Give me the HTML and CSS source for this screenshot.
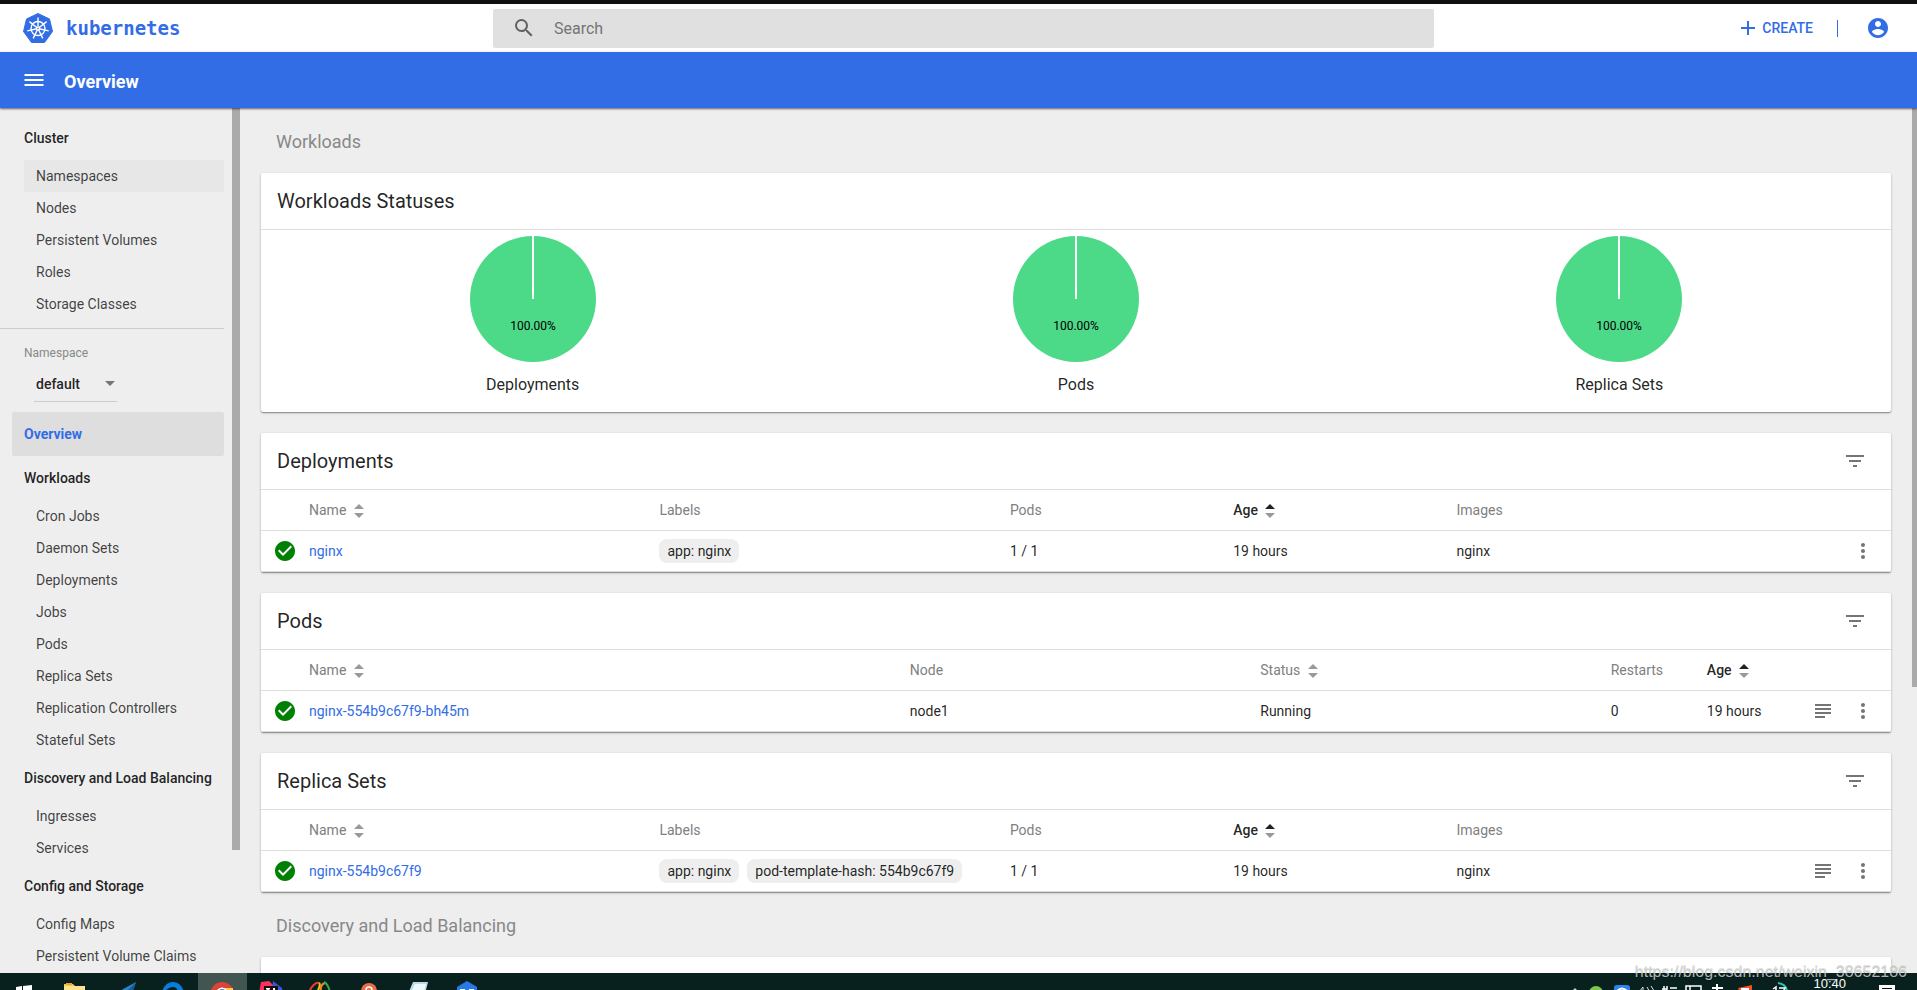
FILE: index.html
```html
<!DOCTYPE html>
<html lang="en">
<head>
<meta charset="utf-8">
<title>Overview - Kubernetes Dashboard</title>
<link rel="stylesheet" href="styles.css">
</head>
<body>
<svg class="defs" aria-hidden="true">
  <symbol id="filter" viewBox="0 0 24 24"><path d="M10 18h4v-2h-4v2zM3 6v2h18V6H3zm3 7h12v-2H6v2z"/></symbol>
  <symbol id="more" viewBox="0 0 24 24"><path d="M12 8c1.1 0 2-.9 2-2s-.9-2-2-2-2 .9-2 2 .9 2 2 2zm0 2c-1.1 0-2 .9-2 2s.9 2 2 2 2-.9 2-2-.9-2-2-2zm0 6c-1.1 0-2 .9-2 2s.9 2 2 2 2-.9 2-2-.9-2-2-2z"/></symbol>
  <symbol id="logs" viewBox="0 0 24 24"><path d="M4 5h16v2H4zM4 9h16v2H4zM4 13h16v2H4zM4 17h10v2H4z"/></symbol>
  <symbol id="check" viewBox="0 0 24 24"><path d="M12 2C6.480 2 2 6.480 2 12s4.480 10 10 10 10-4.480 10-10S17.520 2 12 2zm-2 15l-5-5 1.410-1.410L10 14.170l7.590-7.590L19 8l-9 9z"/></symbol>
  <symbol id="sort" viewBox="0 0 10 14"><path class="up" d="M0 5 5 0l5 5z"/><path class="down" d="M0 9h10l-5 5z"/></symbol>
</svg>

<header class="topbar">
  <a class="brand" href="#">
    <svg class="logo" viewBox="0 0 30 30" aria-hidden="true">
      <path class="logo-bg" d="M15 0.500 26.500 6 29.500 18.500 21.500 29.500H8.500L0.500 18.500 3.500 6z"/>
      <g class="wheel">
        <circle cx="15" cy="15.500" r="7"/>
        <path d="M15 4.500v9M15 15.500 23.600 8.600M15 15.500 25.700 17.900M15 15.500 19.800 25.400M15 15.500 10.200 25.400M15 15.500 4.300 17.900M15 15.500 6.400 8.600"/>
      </g>
      <circle class="hub" cx="15" cy="15.500" r="2.200"/>
      <circle class="hub-core" cx="15" cy="15.500" r="0.800"/>
    </svg>
    <span class="wordmark">kubernetes</span>
  </a>
  <form class="search" role="search">
    <svg class="icon" viewBox="0 0 24 24" aria-hidden="true"><path d="M15.500 14h-.79l-.28-.27A6.470 6.470 0 0 0 16 9.500 6.500 6.500 0 1 0 9.500 16c1.610 0 3.090-.59 4.230-1.570l.27.28v.79l5 4.990L20.490 19l-4.990-5zm-6 0C7.010 14 5 11.990 5 9.500S7.010 5 9.500 5 14 7.010 14 9.500 11.990 14 9.500 14z"/></svg>
    <input class="search-input" type="text" placeholder="Search" aria-label="Search">
  </form>
  <div class="actions">
    <button class="create" type="button"><svg class="icon" viewBox="0 0 24 24" aria-hidden="true"><path d="M19 13h-6v6h-2v-6H5v-2h6V5h2v6h6v2z"/></svg>CREATE</button>
    <span class="separator"></span>
    <button class="icon-button user" type="button" aria-label="Account"><svg class="icon" viewBox="0 0 24 24" aria-hidden="true"><path d="M12 2C6.480 2 2 6.480 2 12s4.480 10 10 10 10-4.480 10-10S17.520 2 12 2zm0 3c1.660 0 3 1.340 3 3s-1.340 3-3 3-3-1.340-3-3 1.340-3 3-3zm0 14.200c-2.500 0-4.710-1.280-6-3.220.03-1.990 4-3.080 6-3.080 1.990 0 5.970 1.090 6 3.080-1.290 1.940-3.500 3.220-6 3.220z"/></svg></button>
  </div>
</header>

<div class="titlebar">
  <button class="icon-button menu" type="button" aria-label="Toggle navigation"><svg class="icon" viewBox="0 0 24 24" aria-hidden="true"><path d="M2.500 18h19v-2h-19v2zm0-5h19v-2h-19v2zm0-7v2h19V6h-19z"/></svg></button>
  <h1 class="page-title">Overview</h1>
</div>

<div class="body">
  <nav class="sidebar">
    <div class="nav-scroll">
      <a class="nav-group" href="#">Cluster</a>
      <a class="nav-item hovered" href="#">Namespaces</a>
      <a class="nav-item" href="#">Nodes</a>
      <a class="nav-item" href="#">Persistent Volumes</a>
      <a class="nav-item" href="#">Roles</a>
      <a class="nav-item" href="#">Storage Classes</a>
      <div class="namespace">
        <label class="namespace-label" for="ns">Namespace</label>
        <div class="select-wrap">
          <select class="namespace-select" id="ns"><option>default</option></select>
          <svg class="caret" viewBox="0 0 10 5" aria-hidden="true"><path d="M0 0h10L5 5z"/></svg>
        </div>
      </div>
      <a class="nav-overview" href="#">Overview</a>
      <a class="nav-group" href="#">Workloads</a>
      <a class="nav-item" href="#">Cron Jobs</a>
      <a class="nav-item" href="#">Daemon Sets</a>
      <a class="nav-item" href="#">Deployments</a>
      <a class="nav-item" href="#">Jobs</a>
      <a class="nav-item" href="#">Pods</a>
      <a class="nav-item" href="#">Replica Sets</a>
      <a class="nav-item" href="#">Replication Controllers</a>
      <a class="nav-item" href="#">Stateful Sets</a>
      <a class="nav-group" href="#">Discovery and Load Balancing</a>
      <a class="nav-item" href="#">Ingresses</a>
      <a class="nav-item" href="#">Services</a>
      <a class="nav-group" href="#">Config and Storage</a>
      <a class="nav-item" href="#">Config Maps</a>
      <a class="nav-item" href="#">Persistent Volume Claims</a>
    </div>
    <div class="scroll-track"><div class="thumb nav-thumb"></div></div>
  </nav>

  <main class="content">
    <div class="cards">
      <h2 class="section-title">Workloads</h2>

      <section class="card">
        <div class="card-head"><h3 class="card-title">Workloads Statuses</h3></div>
        <div class="charts">
          <figure class="chart">
            <svg class="pie" viewBox="0 0 126 126" aria-hidden="true"><circle cx="63" cy="63" r="63"/><path d="M63 0v63"/><text x="63" y="94">100.00%</text></svg>
            <figcaption>Deployments</figcaption>
          </figure>
          <figure class="chart">
            <svg class="pie" viewBox="0 0 126 126" aria-hidden="true"><circle cx="63" cy="63" r="63"/><path d="M63 0v63"/><text x="63" y="94">100.00%</text></svg>
            <figcaption>Pods</figcaption>
          </figure>
          <figure class="chart">
            <svg class="pie" viewBox="0 0 126 126" aria-hidden="true"><circle cx="63" cy="63" r="63"/><path d="M63 0v63"/><text x="63" y="94">100.00%</text></svg>
            <figcaption>Replica Sets</figcaption>
          </figure>
        </div>
      </section>

      <section class="card">
        <div class="card-head"><h3 class="card-title">Deployments</h3><button class="icon-button" type="button" aria-label="Filter deployments"><svg class="icon"><use href="#filter"/></svg></button></div>
        <table class="table">
          <colgroup><col class="c-status"><col class="c-large"><col class="c-large"><col class="c-medium"><col class="c-medium"><col><col class="c-actions"></colgroup>
          <thead><tr><th></th><th>Name <svg class="sort"><use href="#sort"/></svg></th><th>Labels</th><th>Pods</th><th class="sorted">Age <svg class="sort"><use href="#sort"/></svg></th><th>Images</th><th></th></tr></thead>
          <tbody><tr><td><svg class="icon ok"><use href="#check"/></svg></td><td><a class="link" href="#">nginx</a></td><td><span class="chip">app: nginx</span></td><td>1 / 1</td><td>19 hours</td><td>nginx</td><td><div class="row-actions"><button class="icon-button" type="button" aria-label="More"><svg class="icon"><use href="#more"/></svg></button></div></td></tr></tbody>
        </table>
      </section>

      <section class="card">
        <div class="card-head"><h3 class="card-title">Pods</h3><button class="icon-button" type="button" aria-label="Filter pods"><svg class="icon"><use href="#filter"/></svg></button></div>
        <table class="table">
          <colgroup><col class="c-status"><col><col class="c-large"><col class="c-large"><col class="c-small"><col class="c-small"><col class="c-actions"></colgroup>
          <thead><tr><th></th><th>Name <svg class="sort"><use href="#sort"/></svg></th><th>Node</th><th>Status <svg class="sort"><use href="#sort"/></svg></th><th>Restarts</th><th class="sorted">Age <svg class="sort"><use href="#sort"/></svg></th><th></th></tr></thead>
          <tbody><tr><td><svg class="icon ok"><use href="#check"/></svg></td><td><a class="link" href="#">nginx-554b9c67f9-bh45m</a></td><td>node1</td><td>Running</td><td>0</td><td>19 hours</td><td><div class="row-actions"><button class="icon-button" type="button" aria-label="Logs"><svg class="icon"><use href="#logs"/></svg></button><button class="icon-button" type="button" aria-label="More"><svg class="icon"><use href="#more"/></svg></button></div></td></tr></tbody>
        </table>
      </section>

      <section class="card">
        <div class="card-head"><h3 class="card-title">Replica Sets</h3><button class="icon-button" type="button" aria-label="Filter replica sets"><svg class="icon"><use href="#filter"/></svg></button></div>
        <table class="table">
          <colgroup><col class="c-status"><col class="c-large"><col class="c-large"><col class="c-medium"><col class="c-medium"><col><col class="c-actions"></colgroup>
          <thead><tr><th></th><th>Name <svg class="sort"><use href="#sort"/></svg></th><th>Labels</th><th>Pods</th><th class="sorted">Age <svg class="sort"><use href="#sort"/></svg></th><th>Images</th><th></th></tr></thead>
          <tbody><tr><td><svg class="icon ok"><use href="#check"/></svg></td><td><a class="link" href="#">nginx-554b9c67f9</a></td><td><span class="chip">app: nginx</span><span class="chip">pod-template-hash: 554b9c67f9</span></td><td>1 / 1</td><td>19 hours</td><td>nginx</td><td><div class="row-actions"><button class="icon-button" type="button" aria-label="Logs"><svg class="icon"><use href="#logs"/></svg></button><button class="icon-button" type="button" aria-label="More"><svg class="icon"><use href="#more"/></svg></button></div></td></tr></tbody>
        </table>
      </section>

      <h2 class="section-title">Discovery and Load Balancing</h2>
      <section class="card"><div class="card-head"></div></section>
    </div>
    <div class="scroll-track"><div class="thumb page-thumb"></div></div>
  </main>
</div>

<footer class="taskbar">
  <div class="apps">
    <span class="app"><svg class="app-icon" viewBox="0 0 24 24"><path fill="#fff" d="M2 6l6-1v8H2zM9 5l9-1v9H9z"/></svg></span>
    <span class="app"><svg class="app-icon" viewBox="0 0 24 24"><path fill="#f5c84c" d="M1 3h9l2 2h10v8H1z"/><path fill="#ffe28c" d="M1 5h21v8H1z"/><path fill="#e8a33a" d="M3 2h6v2H3z"/></svg></span>
    <span class="app"><svg class="app-icon" viewBox="0 0 24 24"><path fill="#2a86c8" d="M24 1 4 12h16z"/><path fill="#175a94" d="M24 1 13 12h7z"/></svg></span>
    <span class="app"><svg class="app-icon" viewBox="0 0 24 24"><path fill="#0a7ddc" d="M1 12C2 5 7 1 12 1s10 4 11 11h-6c0-4-2-6-5-6s-6 2-11 6z"/></svg></span>
    <span class="app active"><svg class="app-icon" viewBox="0 0 24 24"><path fill="#db4437" d="M1 9C3 4 7 1 12 1s9 3 11 7H12l-6 4H3z"/><path fill="#ffcd40" d="M13 7h10v5H13z"/><circle cx="12" cy="12" r="5.500" fill="#fff"/><circle cx="12" cy="12" r="4" fill="#4285f4"/></svg></span>
    <span class="app"><svg class="app-icon" viewBox="0 0 24 24"><path fill="#fe315d" d="M2 1 10 0l4 4v8H0z"/><path fill="#3f55d8" d="M14 0l9 7 1 5H13z"/><path fill="#111" d="M5 5h14v7H5z"/><path fill="#fff" d="M7 7h4v1.500H9.800V12H8.200V8.500H7zM14 7h2v5h-2z"/></svg></span>
    <span class="app"><svg class="app-icon" viewBox="0 0 24 24" fill="none" stroke-width="2"><path stroke="#ec3b2f" d="M1 12C3 5 8 1 11 2"/><path stroke="#f7c51e" d="M11 2c2 1 0 5-2 10"/><path stroke="#f08a24" d="M13 12c-1-6 1-9 4-10"/><path stroke="#35a853" d="M16 1c2 1 5 5 6 11"/></svg></span>
    <span class="app"><svg class="app-icon" viewBox="0 0 24 24"><path fill="#ee6a4b" d="M4 10a8 8 0 0 1 16 0v4H4z"/><circle cx="12" cy="9" r="3" fill="none" stroke="#fff" stroke-width="1.500"/></svg></span>
    <span class="app"><svg class="app-icon" viewBox="0 0 24 24"><path fill="#b9dce6" d="M7 1h15l-3 12H2z"/><path fill="#eef8fb" d="M9 3h11l-2 8H5z"/></svg></span>
    <span class="app"><svg class="app-icon" viewBox="0 0 24 24"><path fill="#2878e8" d="M2 6 12 0l10 6v8H2z"/><path fill="#fff" d="M5 8h5v4H5zM14 8h5v4h-5z"/></svg></span>
  </div>
  <div class="tray">
    <svg class="tray-icons" viewBox="0 0 240 17" aria-hidden="true">
      <path d="M0 17l2-2 2 2z" fill="#ccc"/>
      <circle cx="23" cy="20" r="7" fill="#7cc84a"/>
      <rect x="41" y="12" width="16" height="14" rx="3" fill="#2b84ee"/><path d="M44 18q5-5 10 0" fill="none" stroke="#fff" stroke-width="2"/>
      <path d="M66 19l4-5v8M74 14q3 3 1 7M78 13q4 4 2 8" fill="none" stroke="#ddd"/>
      <path d="M89 16h5M91 13v5M94 13v5M97 15h7M113 13h15v10h-15zM117 13v9" fill="none" stroke="#fff" stroke-width="1.500"/>
      <path d="M144 11v8M139 15h11" stroke="#fff" stroke-width="2"/>
      <path d="M165 15l14-3v8h-12z" fill="#f4511e"/><path d="M168 16h8" stroke="#fff" stroke-width="2"/>
      <path d="M205 10q8 1 9 8" fill="none" stroke="#29c7ac" stroke-width="2"/><path d="M200 16l3-2v4M206 15h6l-2 4" fill="none" stroke="#fff" stroke-width="1.500"/>
    </svg>
    <time class="clock">10:40</time>
    <svg class="note" viewBox="0 0 16 12" aria-hidden="true"><path fill="#fff" d="M0 0h16v12H0z"/><path stroke="#111" d="M3 3.500h10"/></svg>
  </div>
</footer>
<div class="watermark">https://blog.csdn.net/weixin_38652186</div>
</body>
</html>
```
FILE: styles.css
```css
* { box-sizing: border-box; }

body {
  display: flex;
  flex-direction: column;
  height: 100vh;
  margin: 0;
  overflow: hidden;
  border-top: 4px solid #111;
  background: #eee;
  color: rgba(0, 0, 0, 0.87);
  font: 14px/20px Roboto, "Noto Sans", sans-serif;
}

h1, h2, h3, figure { margin: 0; font-weight: 400; }
a { color: inherit; text-decoration: none; }
button, input, select { font: inherit; }
button { padding: 0; border: 0; background: none; color: inherit; }
.defs { position: absolute; width: 0; height: 0; }
.icon { display: block; width: 24px; height: 24px; fill: currentColor; }
.icon-button { display: block; }

/* Header */
.topbar {
  display: grid;
  grid-template-columns: 493fr 941fr 483fr;
  flex: none;
  align-items: center;
  height: 48px;
  background: #fff;
}
.brand { display: flex; align-items: center; gap: 13px; padding-left: 23px; color: #326de6; }
.logo { width: 30px; height: 30px; }
.logo-bg { fill: #326de6; stroke: #326de6; stroke-linejoin: round; }
.wheel { fill: none; stroke: #fff; stroke-width: 1.4; }
.hub { fill: #fff; }
.hub-core { fill: #326de6; }
.wordmark { font: 700 19px/24px "DejaVu Sans Mono", monospace; }
.search {
  display: flex;
  align-items: center;
  gap: 18px;
  height: 39px;
  padding-left: 19px;
  border-radius: 2px;
  background: #e0e0e0;
  color: #616161;
}
.search-input {
  flex: 1;
  min-width: 0;
  padding: 2px 0 0;
  border: 0;
  outline: 0;
  background: none;
  color: inherit;
  font-size: 16px;
}
.search-input::placeholder { color: #757575; opacity: 1; }
.actions { display: flex; align-items: center; justify-content: flex-end; padding-right: 27px; color: #326de6; }
.create { display: flex; align-items: center; gap: 2px; font-weight: 500; }
.separator { width: 1px; height: 17px; margin: 0 28px 0 24px; background: #326de6; }

.titlebar {
  display: flex;
  position: relative;
  z-index: 1;
  flex: none;
  align-items: center;
  gap: 18px;
  height: 56px;
  padding-left: 22px;
  background: #326de6;
  box-shadow: 0 1px 2px rgba(0, 0, 0, 0.6);
  color: #fff;
}
.page-title { padding-top: 3px; font-size: 18px; font-weight: 700; line-height: 24px; }

.body { display: flex; flex: 1; min-height: 0; }
.scroll-track { flex: none; }
.thumb { background: #aaa; }

/* Navigation */
.sidebar { display: flex; flex: none; width: 240px; overflow: hidden; }
.nav-scroll { flex: 1; padding: 8px 8px 0 0; }
.nav-thumb { width: 8px; height: 742px; }
.nav-group { display: block; padding: 12px 0 12px 24px; font-weight: 500; white-space: nowrap; }
.nav-item {
  display: block;
  margin-left: 24px;
  padding: 6px 12px;
  border-radius: 2px;
  color: rgba(0, 0, 0, 0.74);
}
.hovered { background: #e7e7e7; }
.namespace { margin-top: 8px; padding: 14px 0 10px 24px; border-top: 1px solid #ccc; }
.namespace-label { display: block; color: #888; font-size: 12px; }
.select-wrap { position: relative; width: 83px; margin: 4px 0 0 10px; border-bottom: 1px solid #ccc; }
.namespace-select {
  display: block;
  width: 100%;
  height: 34px;
  padding: 0 2px;
  border: 0;
  background: none;
  color: inherit;
  font-weight: 500;
  appearance: none;
}
.caret { position: absolute; top: 14px; right: 2px; width: 10px; height: 5px; fill: #757575; }
.nav-overview {
  display: block;
  margin-left: 12px;
  padding: 12px;
  border-radius: 2px;
  background: #dedede;
  color: #326de6;
  font-weight: 700;
}

/* Cards */
.content { display: flex; flex: 1; min-width: 0; overflow: hidden; }
.cards { flex: 1; min-width: 0; padding: 0 21px; }
.page-thumb { width: 5px; height: 579px; }
.section-title { padding: 22px 15px 20px; color: #888; font-size: 18px; line-height: 23px; }
.card {
  border-radius: 2px;
  background: #fff;
  box-shadow: 0 1px 3px rgba(0, 0, 0, 0.2), 0 1px 1px rgba(0, 0, 0, 0.3);
}
.card + .card { margin-top: 21px; }
.card-head {
  display: flex;
  align-items: center;
  justify-content: space-between;
  height: 56px;
  padding: 0 24px 0 16px;
  color: #757575;
}
.card-title { color: rgba(0, 0, 0, 0.87); font-size: 20px; line-height: 24px; }
.charts { display: flex; border-top: 1px solid #ddd; }
.chart { display: flex; flex: 1; flex-direction: column; align-items: center; padding: 6px 0 15px; }
.pie { width: 126px; height: 126px; fill: #4cd988; }
.pie path { stroke: #fff; stroke-width: 2; }
.pie text { fill: #000; font-size: 12px; text-anchor: middle; }
figcaption { margin-top: 11px; font-size: 16px; line-height: 24px; }

.table { width: 100%; table-layout: fixed; border-spacing: 0; border-bottom: 1px solid #ddd; }
.c-status { width: 48px; }
.c-large { width: 21.5%; }
.c-medium { width: 13.7%; }
.c-small { width: 5.9%; }
.c-actions { width: 88px; }
.table th, .table td { height: 41px; padding: 0; border-top: 1px solid #ddd; text-align: left; white-space: nowrap; }
.table th { color: #808080; font-weight: 400; }
.table .sorted { --up: #222; color: rgba(0, 0, 0, 0.87); font-weight: 500; }
.sort { width: 10px; height: 14px; margin-left: 4px; vertical-align: middle; fill: #999; }
.up { fill: var(--up, #999); }
.ok { margin-left: 12px; color: #008000; }
.link { color: #326de6; }
.chip {
  display: inline-block;
  margin-right: 8px;
  padding: 2px 8px;
  border-radius: 8px;
  background: #eee;
}
.row-actions { display: flex; justify-content: flex-end; gap: 16px; padding-right: 16px; color: #757575; }

/* Desktop taskbar */
.taskbar {
  display: flex;
  position: relative;
  z-index: 2;
  flex: none;
  justify-content: space-between;
  height: 17px;
  overflow: hidden;
  background: #08211e;
}
.apps { display: flex; padding-left: 2px; }
.app { width: 49px; padding: 8px 12px 0; }
.app.active { background: #425550; }
.app-icon { display: block; width: 24px; height: 24px; }
.tray { display: flex; align-items: flex-start; padding-right: 22px; }
.tray-icons { width: 240px; height: 17px; }
.clock { margin: 5px 33px 0 0; color: #fff; font: 13px/12px "Liberation Sans", sans-serif; }
.note { width: 16px; height: 12px; margin-top: 12px; }
.watermark {
  position: absolute;
  right: 10px;
  bottom: 8px;
  z-index: 3;
  color: rgba(220, 220, 220, 0.8);
  font: 16px/20px "Liberation Sans", sans-serif;
  text-shadow: 0 1px 1px rgba(0, 0, 0, 0.3);
}
```
